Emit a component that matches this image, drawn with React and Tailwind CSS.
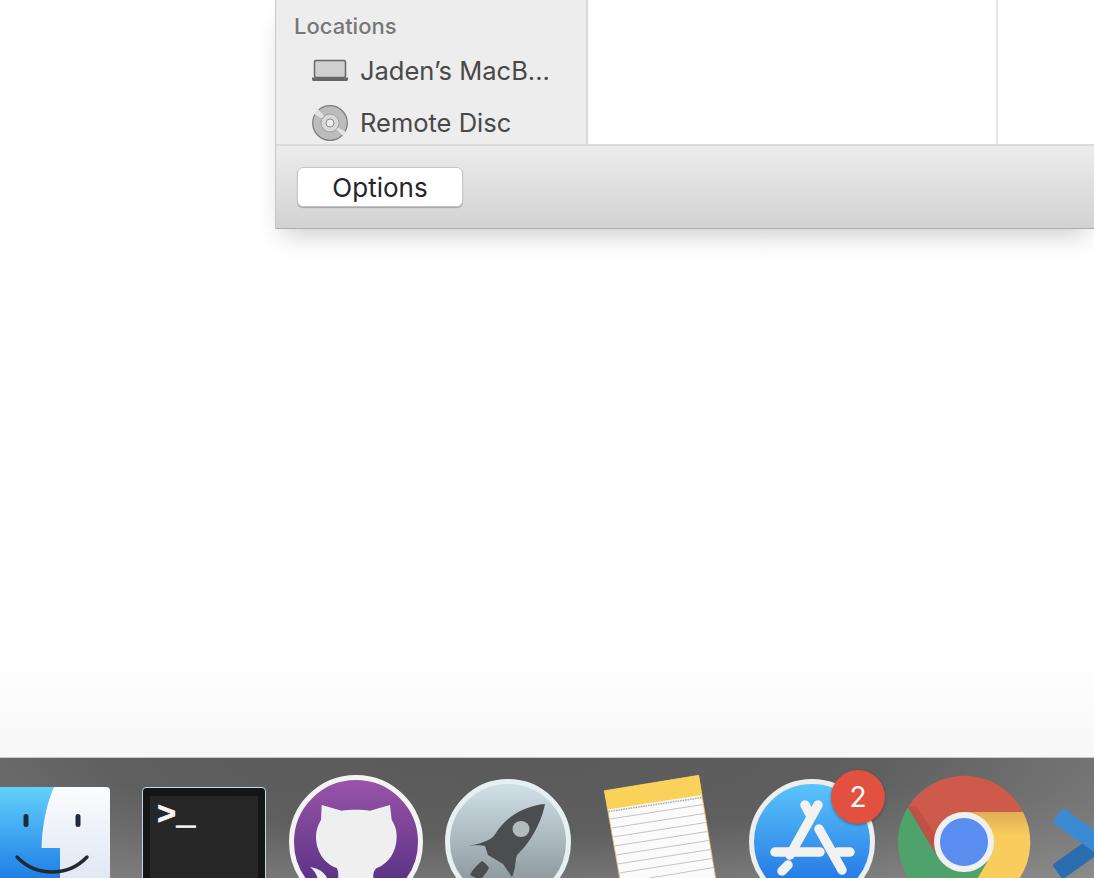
import React from 'react';

const FinderIcon = () => (
  <svg width="111" height="91" viewBox="0 787 111 91" className="block">
    <defs>
      <linearGradient id="finderBlue" x1="0" y1="0" x2="0" y2="1">
        <stop offset="0" stopColor="#62d0fb" />
        <stop offset="1" stopColor="#1f7fe6" />
      </linearGradient>
      <linearGradient id="finderLight" x1="0" y1="0" x2="0" y2="1">
        <stop offset="0" stopColor="#fbfcfd" />
        <stop offset="1" stopColor="#dfe8f4" />
      </linearGradient>
    </defs>
    <path d="M-10 787H106a4 4 0 0 1 4 4V878H-10Z" fill="url(#finderLight)" />
    <path d="M-10 787H54C46 805 42 828 41.500 848H60V878H-10Z" fill="url(#finderBlue)" />
    <rect x="23.500" y="814" width="5" height="13" rx="2.500" fill="#1c2a3a" />
    <rect x="75.500" y="814" width="5" height="13" rx="2.500" fill="#1c2a3a" />
    <path d="M17 857C36 877 68 877 87 857" fill="none" stroke="#24292f" strokeWidth="3.500" strokeLinecap="round" />
  </svg>
);

const TerminalIcon = () => (
  <svg width="125" height="91" viewBox="142 787 125 91" className="block">
    <rect x="142.500" y="787.500" width="123" height="100" rx="3.500" fill="#151515" stroke="#c3dbe4" />
    <rect x="150" y="796" width="108" height="90" fill="#262626" />
    <text x="157" y="824" fontFamily="'Liberation Mono', monospace" fontWeight="700" fontSize="32" fill="#f4f4f4" stroke="#f4f4f4" strokeWidth="0.800">{'>_'}</text>
  </svg>
);

const GithubIcon = () => (
  <svg width="136" height="104" viewBox="288 774 136 104" className="block">
    <defs>
      <linearGradient id="ghPurple" x1="0" y1="0" x2="0" y2="1">
        <stop offset="0" stopColor="#9a55a9" />
        <stop offset="1" stopColor="#4c2a7c" />
      </linearGradient>
    </defs>
    <circle cx="356" cy="842" r="64.500" fill="url(#ghPurple)" stroke="#f3f3f3" strokeWidth="5" />
    <path d="M321.700 805L341.700 810.700C350 809.600 362 809.600 370 810.700L390 805L391.700 820C395 825 396.700 830 396.700 836.700C396.700 852 388 864 376.700 868C373 871 373 875 373.500 880H338C338.500 875 338.500 871 336.700 868C325 864 316 852 316 836.700C316 830 318 825 321 820Z" fill="#efefef" />
    <path d="M310 867C316 868 322 870 326 876L328 880H318C317 875 314 870 310 867Z" fill="#efefef" />
  </svg>
);

const RocketIcon = () => (
  <svg width="128" height="100" viewBox="444 778 128 100" className="block">
    <defs>
      <linearGradient id="rocketBg" x1="0" y1="0" x2="0" y2="1">
        <stop offset="0" stopColor="#d3e2e9" />
        <stop offset="1" stopColor="#7f8a8e" />
      </linearGradient>
    </defs>
    <circle cx="508" cy="842" r="60.500" fill="url(#rocketBg)" stroke="#e6f0f3" strokeWidth="5" />
    <path d="M545 804C532 805 517 811 507 820C499 827 497 832 493 837C487 842 475 845 463 847C472 845 480 845 485 846L488 855L503 864L512 877C516 868 515 860 517 855C528 845 541 825 545 804Z" fill="#4a4e51" />
    <path d="M482 861C477 865 472 870 470 875L480 880C484 876 487 872 489 868L486 864Z" fill="#4a4e51" />
    <ellipse cx="521" cy="829" rx="8.500" ry="8" fill="#b4bbbe" />
  </svg>
);

const NotesIcon = () => (
  <svg width="116" height="104" viewBox="603 774 116 104" className="block">
    <path d="M604.300 790.700L698.700 775.300L716 880H620Z" fill="#fbfbfb" stroke="#dcb957" strokeWidth="0.800" />
    <path d="M604.300 790.700L698.700 775.300L702 795L608 809.500Z" fill="#fad25a" />
    <path d="M608.500 811.500L702 797.500" stroke="#a5a5a5" strokeWidth="1.500" strokeDasharray="1.500 1" />
    <g stroke="#c4c4c4" strokeWidth="1">
      <path d="M610 819L703 804.500" />
      <path d="M611.500 828L704.500 813.500" />
      <path d="M613 837L706 822.500" />
      <path d="M614.500 846L707.500 831.500" />
      <path d="M616 855L709 840.500" />
      <path d="M617.500 864L710.500 849.500" />
      <path d="M619 873L712 858.500" />
      <path d="M650 878L713.500 867.500" />
    </g>
  </svg>
);

const AppStoreIcon = () => (
  <svg width="128" height="100" viewBox="748 778 128 100" className="block">
    <defs>
      <linearGradient id="storeBg" x1="0" y1="0" x2="0" y2="1">
        <stop offset="0" stopColor="#5cc6fb" />
        <stop offset="1" stopColor="#1a6ae0" />
      </linearGradient>
    </defs>
    <circle cx="812" cy="842" r="60.500" fill="url(#storeBg)" stroke="#eeeeee" strokeWidth="5" />
    <g stroke="#f2f2f2" strokeWidth="9.500" strokeLinecap="round" fill="none">
      <path d="M805 805L811 816" />
      <path d="M819 829L842 870" />
      <path d="M818 805L790 855" />
      <path d="M788 865L782 871" />
      <path d="M775 852H820" />
      <path d="M838 852H850" />
    </g>
  </svg>
);

const ChromeIcon = () => (
  <svg width="134" height="104" viewBox="898 774 134 104" className="block">
    <defs>
      <linearGradient id="chromeYellow" x1="0" y1="0" x2="0" y2="1">
        <stop offset="0" stopColor="#e0ae52" />
        <stop offset="0.250" stopColor="#f8cd5e" />
        <stop offset="1" stopColor="#f8cd5e" />
      </linearGradient>
    </defs>
    <path d="M964 812H1023A66 66 0 0 1 960 908L987 862Z" fill="url(#chromeYellow)" />
    <path d="M908 807L936 855L987 862L960 908A66 66 0 0 1 908 807Z" fill="#4fa26a" />
    <path d="M908 807A66 66 0 0 1 1023 812H964L935 852Z" fill="#cd5a4b" />
    <path d="M908 807L935 852L938 838L916 806Z" fill="#a9473c" opacity="0.400" />
    <circle cx="964" cy="842" r="27" fill="#5a8df0" stroke="#f0f0f0" strokeWidth="6" />
  </svg>
);

const VscodeIcon = () => (
  <svg width="44" height="70" viewBox="1050 808 44 70" className="block">
    <path d="M1063 876.700L1055 865.300L1100 833.300L1108 844.700Z" fill="#2a6db0" stroke="#2a6db0" strokeWidth="4" strokeLinejoin="round" />
    <path d="M1063 810.300L1055 821.700L1100 853.700L1108 842.300Z" fill="#3a8bd1" stroke="#3a8bd1" strokeWidth="4" strokeLinejoin="round" />
  </svg>
);

const LaptopIcon = () => (
  <svg width="36" height="24" viewBox="0 0 36 24">
    <rect x="2.500" y="1.500" width="31" height="17" rx="1.500" fill="#cfcfcf" stroke="#666666" strokeWidth="1.500" />
    <path d="M0 18.500H36V20.500C36 21.300 35.300 22 34.500 22H1.500C0.700 22 0 21.300 0 20.500Z" fill="#666666" />
  </svg>
);

const DiscIcon = () => (
  <svg width="36" height="36" viewBox="0 0 36 36">
    <circle cx="18" cy="18" r="17.300" fill="#bcbcbc" stroke="#7b7b7b" strokeWidth="1.200" />
    <path d="M18 18L6 4A18 18 0 0 0 2 9Z" fill="#e2e2e2" />
    <path d="M18 18L31 31A18 18 0 0 0 34 27Z" fill="#e2e2e2" />
    <circle cx="18" cy="18" r="9" fill="#d8d8d8" stroke="#a0a0a0" />
    <circle cx="18" cy="18" r="4" fill="#ececec" stroke="#8c8c8c" />
  </svg>
);

const SidebarRow = ({ icon, label }) => (
  <div className="flex items-center h-[52px] pl-[36px]">
    <div className="w-[36px] flex justify-center shrink-0">{icon}</div>
    <span className="ml-[12px] text-[25.500px] leading-none text-[#484848]">{label}</span>
  </div>
);

export default function App() {
  return (
    <div className="relative h-[878px] w-[1094px] overflow-hidden flex flex-col font-['Inter','Liberation_Sans',sans-serif] bg-[linear-gradient(180deg,#ffffff_0%,#fefefe_76%,#efefef_100%)]">
      {/* finder window, bottom part */}
      <div className="ml-[275px] h-[229px] flex flex-col shrink-0 border-l border-[#c9c9c9] border-b-[#aeaeae] border-b shadow-[0_14px_24px_-8px_rgba(0,0,0,0.2)] bg-white">
        <div className="flex h-[144px] shrink-0">
          <div className="w-[312px] bg-[#ededed] border-r-2 border-[#d8d8d8] overflow-hidden pt-[13px] shrink-0">
            <div className="pl-[18px] h-[32px] text-[22px] leading-[26px] font-medium text-[#777777]">Locations</div>
            <SidebarRow icon={<LaptopIcon />} label="Jaden’s MacB..." />
            <SidebarRow icon={<DiscIcon />} label="Remote Disc" />
          </div>
          <div className="w-[410px] border-r-2 border-[#e4e4e4] shrink-0" />
          <div className="flex-1" />
        </div>
        <div className="flex-1 flex items-center pl-[21px] border-t-2 border-[#dadada] bg-[linear-gradient(180deg,#ececec,#d2d2d2)]">
          <button className="w-[166px] h-[40px] pt-[2px] bg-white rounded-[6px] border border-[#c6c6c6] shadow-[0_1px_1px_rgba(0,0,0,0.25)] text-[26px] leading-none text-[#262626]">
            Options
          </button>
        </div>
      </div>

      {/* dock */}
      <div className="absolute left-0 right-0 bottom-0 h-[121px] flex items-start overflow-hidden border-t border-[#c8c8c8] bg-[radial-gradient(ellipse_at_45%_0%,#5a5a5a_0%,#5f5f5f_45%,#8c8c8c_100%)]">
        <div className="mt-[29px] shrink-0"><FinderIcon /></div>
        <div className="mt-[29px] ml-[31px] shrink-0"><TerminalIcon /></div>
        <div className="mt-[16px] ml-[21px] shrink-0"><GithubIcon /></div>
        <div className="mt-[20px] ml-[20px] shrink-0"><RocketIcon /></div>
        <div className="mt-[16px] ml-[31px] shrink-0"><NotesIcon /></div>
        <div className="relative mt-[20px] ml-[29px] shrink-0">
          <AppStoreIcon />
          <div className="absolute left-[83px] top-[-8px] w-[54px] h-[54px] rounded-full bg-[#e2513f] flex items-center justify-center text-white text-[28px] leading-none shadow-[0_1px_3px_rgba(0,0,0,0.35)]">
            2
          </div>
        </div>
        <div className="mt-[16px] ml-[22px] shrink-0"><ChromeIcon /></div>
        <div className="mt-[50px] ml-[18px] shrink-0"><VscodeIcon /></div>
      </div>
    </div>
  );
}
